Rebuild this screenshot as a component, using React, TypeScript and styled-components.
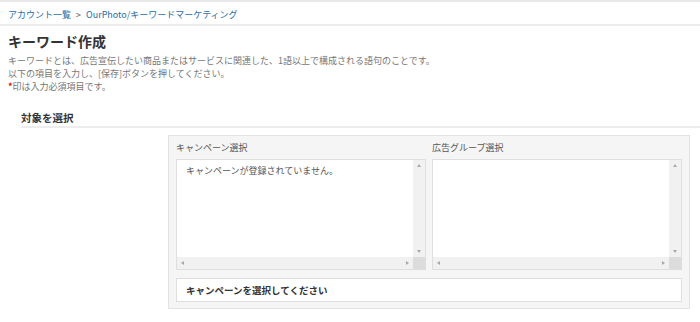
import { createGlobalStyle, styled } from 'styled-components'

const GlobalStyle = createGlobalStyle`
  body {
    margin: 0;
    background: #fff;
    font-family: 'Noto Sans CJK JP', 'Noto Sans', sans-serif;
    color: #666;
  }
`

type Arrow = 'up' | 'down' | 'left' | 'right'

const ListBox = ({ message }: { message?: string }) => {
  return (
    <ListFrame>
      <ListContent>{message && <Empty>{message}</Empty>}</ListContent>
      <VTrack>
        <ArrowMark dir="up" />
        <ArrowMark dir="down" />
      </VTrack>
      <HTrack>
        <ArrowMark dir="left" />
        <ArrowMark dir="right" />
      </HTrack>
      <Corner />
    </ListFrame>
  )
}

const App = () => {
  return (
    <>
      <GlobalStyle />
      <Page>
        <Breadcrumb>
          <a>アカウント一覧</a>
          <Sep>&gt;</Sep>
          <a>OurPhoto/キーワードマーケティング</a>
        </Breadcrumb>
        <Body>
          <Title>キーワード作成</Title>
          <Desc>
            <p>キーワードとは、広告宣伝したい商品またはサービスに関連した、1語以上で構成される語句のことです。</p>
            <p>以下の項目を入力し、[保存]ボタンを押してください。</p>
            <p>
              <Required>*</Required>印は入力必須項目です。
            </p>
          </Desc>
        </Body>
        <SectionHead>対象を選択</SectionHead>
        <Panel>
          <Columns>
            <Column>
              <Label>キャンペーン選択</Label>
              <ListBox message="キャンペーンが登録されていません。" />
            </Column>
            <Column>
              <Label>広告グループ選択</Label>
              <ListBox />
            </Column>
          </Columns>
          <Notice>キャンペーンを選択してください</Notice>
        </Panel>
      </Page>
    </>
  )
}

const Page = styled.div`
  border-top: 2px solid #e8e8e8;
`

const Breadcrumb = styled.div`
  padding: 6px 8px 2px;
  line-height: 14px;
  font-size: 9px;
  color: #2a6ea6;
  border-bottom: 2px solid #ededed;

  a {
    color: #2a6ea6;
  }
`

const Sep = styled.span`
  margin: 0 5px;
  color: #555;
`

const Body = styled.div`
  padding: 0 8px;
`

const Title = styled.h1`
  margin: 5px 0 3px;
  font-size: 14px;
  line-height: 20px;
  font-weight: bold;
  color: #333;
`

const Desc = styled.div`
  font-size: 9px;
  line-height: 13px;
  color: #777;

  p {
    margin: 0;
  }
`

const Required = styled.span`
  color: #e00;
  font-weight: bold;
`

const SectionHead = styled.h2`
  margin: 18px 0 0 21px;
  padding-bottom: 1px;
  font-size: 10.5px;
  line-height: 14px;
  font-weight: bold;
  color: #333;
  border-bottom: 2px solid #ededed;
`

const Panel = styled.div`
  box-sizing: border-box;
  width: 522px;
  margin: 7px 0 0 168px;
  padding: 5px 7px 6px;
  background: #f5f5f5;
  border: 1px solid #e2e2e2;
`

const Columns = styled.div`
  display: flex;
  gap: 6px;
`

const Column = styled.div`
  width: 250px;
`

const Label = styled.div`
  font-size: 9px;
  line-height: 14px;
  color: #555;
  margin-bottom: 4px;
`

const ListFrame = styled.div`
  box-sizing: border-box;
  height: 111px;
  display: grid;
  grid-template-columns: 1fr 12px;
  grid-template-rows: 1fr 12px;
  border: 1px solid #dedede;
  background: #fff;
`

const ListContent = styled.div`
  padding: 4px 9px;
`

const Empty = styled.div`
  font-size: 9px;
  line-height: 13px;
  color: #555;
`

const VTrack = styled.div`
  background: #f1f1f1;
  display: flex;
  flex-direction: column;
  justify-content: space-between;
  align-items: center;
  padding: 4px 0;
`

const HTrack = styled.div`
  background: #f1f1f1;
  display: flex;
  justify-content: space-between;
  align-items: center;
  padding: 0 4px;
`

const Corner = styled.div`
  background: #dcdcdc;
`

const ArrowMark = styled.span<{ dir: Arrow }>`
  width: 0;
  height: 0;
  border: 2px solid transparent;
  ${({ dir }) =>
    dir === 'up'
      ? 'border-bottom: 3px solid #a8a8a8; border-top-width: 0;'
      : dir === 'down'
        ? 'border-top: 3px solid #a8a8a8; border-bottom-width: 0;'
        : dir === 'left'
          ? 'border-right: 3px solid #a8a8a8; border-left-width: 0;'
          : 'border-left: 3px solid #a8a8a8; border-right-width: 0;'}
`

const Notice = styled.div`
  box-sizing: border-box;
  height: 24px;
  margin-top: 8px;
  padding: 0 9px;
  display: flex;
  align-items: center;
  background: #fff;
  border: 1px solid #dedede;
  font-size: 9.5px;
  font-weight: bold;
  color: #333;
`

export default App
